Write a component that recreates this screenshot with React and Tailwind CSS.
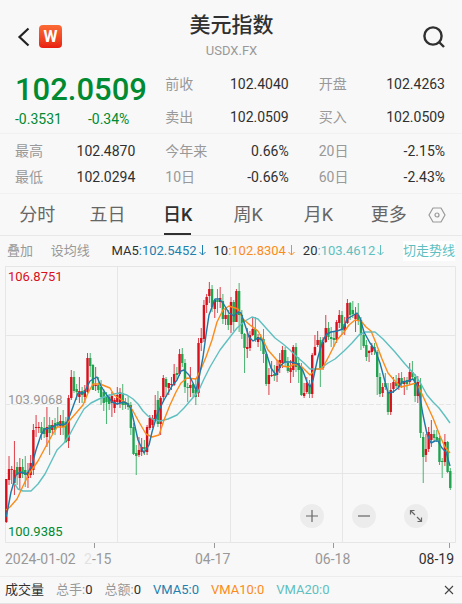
import React, { useState } from "react";

const UP = "#d8101c";
const DOWN = "#1fa34f";

// [direction, high, body top, body bottom, low], one entry per trading day
const candles = [
  ["u", 479, 479, 522, 523], ["u", 456, 469, 480, 485], ["u", 466, 469, 470, 484], ["u", 441, 470, 483, 495],
  ["d", 462, 467, 475, 485], ["u", 458, 467, 478, 490], ["d", 459, 467, 474, 478], ["d", 456, 470, 475, 487],
  ["u", 463, 472, 478, 488], ["u", 455, 463, 475, 478], ["u", 424, 430, 470, 475], ["u", 415, 427, 428, 437],
  ["u", 422, 427, 428, 433], ["d", 422, 427, 433, 440], ["d", 417, 428, 434, 438], ["u", 407, 427, 437, 447],
  ["d", 417, 425, 433, 455], ["u", 420, 425, 430, 434], ["d", 418, 423, 430, 435], ["d", 407, 422, 425, 427],
  ["u", 415, 421, 426, 435], ["d", 410, 421, 427, 435], ["d", 417, 422, 442, 443], ["u", 395, 398, 441, 448],
  ["u", 370, 377, 398, 400], ["d", 371, 377, 391, 393], ["d", 384, 389, 392, 400], ["u", 377, 391, 397, 403],
  ["d", 387, 391, 395, 403], ["u", 385, 390, 397, 403], ["u", 353, 358, 392, 393], ["d", 353, 358, 366, 377],
  ["d", 364, 365, 390, 390], ["u", 367, 385, 386, 391], ["d", 377, 385, 390, 393], ["d", 380, 387, 397, 405],
  ["d", 389, 392, 403, 411], ["d", 392, 397, 402, 424], ["d", 394, 397, 404, 410], ["u", 392, 396, 403, 417],
  ["u", 398, 400, 408, 413], ["u", 387, 395, 402, 405], ["u", 388, 392, 403, 408], ["d", 384, 393, 405, 410],
  ["d", 398, 402, 405, 409], ["d", 396, 403, 407, 410], ["d", 402, 405, 428, 435], ["d", 423, 427, 454, 455],
  ["d", 445, 453, 456, 475], ["u", 437, 450, 455, 457], ["u", 438, 447, 452, 456], ["d", 440, 447, 449, 455],
  ["u", 425, 427, 452, 455], ["u", 415, 418, 428, 430], ["u", 415, 418, 425, 428], ["u", 395, 410, 419, 421],
  ["d", 391, 400, 424, 427], ["u", 396, 398, 424, 435], ["u", 375, 378, 397, 402], ["d", 377, 379, 387, 397],
  ["u", 383, 383, 388, 395], ["u", 377, 384, 385, 390], ["u", 364, 374, 385, 386], ["d", 367, 373, 375, 379],
  ["u", 349, 354, 374, 376], ["d", 348, 354, 363, 367], ["d", 359, 363, 387, 393], ["d", 383, 387, 388, 402],
  ["u", 367, 385, 388, 397], ["d", 383, 384, 393, 397], ["d", 378, 390, 397, 405], ["u", 338, 343, 393, 397],
  ["u", 328, 338, 343, 351], ["u", 300, 305, 339, 342], ["u", 294, 297, 305, 313], ["u", 282, 289, 296, 303],
  ["d", 285, 289, 307, 312], ["u", 299, 300, 309, 318], ["d", 289, 300, 302, 313], ["u", 287, 298, 302, 308],
  ["d", 294, 301, 319, 324], ["u", 309, 315, 319, 325], ["d", 310, 315, 325, 330], ["u", 297, 302, 325, 333],
  ["d", 300, 302, 322, 331], ["u", 289, 291, 322, 322], ["d", 283, 291, 315, 332], ["d", 310, 315, 334, 339],
  ["d", 333, 334, 348, 373], ["u", 328, 347, 349, 358], ["u", 331, 335, 348, 351], ["u", 318, 329, 335, 336],
  ["d", 317, 329, 340, 342], ["u", 334, 337, 342, 347], ["d", 334, 337, 340, 351], ["d", 329, 339, 354, 363],
  ["d", 353, 354, 384, 386], ["u", 368, 375, 384, 395], ["u", 361, 375, 376, 377], ["d", 365, 374, 376, 381],
  ["u", 360, 366, 375, 382], ["u", 353, 360, 368, 373], ["u", 346, 350, 363, 368], ["d", 347, 350, 362, 367],
  ["d", 357, 363, 371, 373], ["u", 360, 368, 372, 383], ["u", 345, 347, 370, 377], ["d", 343, 347, 367, 372],
  ["d", 357, 363, 370, 383], ["d", 363, 367, 395, 396], ["u", 383, 393, 396, 398], ["u", 377, 383, 392, 394],
  ["d", 380, 385, 394, 398], ["u", 353, 355, 394, 398], ["u", 335, 347, 355, 356], ["u", 331, 340, 345, 347],
  ["d", 337, 340, 368, 387], ["u", 337, 342, 368, 370], ["u", 315, 328, 342, 343], ["d", 322, 328, 337, 340],
  ["d", 327, 337, 339, 347], ["d", 331, 338, 340, 347], ["u", 320, 322, 340, 343], ["u", 310, 315, 323, 328],
  ["d", 311, 315, 330, 335], ["u", 317, 324, 331, 335], ["u", 299, 303, 323, 324], ["d", 302, 303, 315, 320],
  ["d", 301, 310, 314, 318], ["u", 307, 314, 319, 332], ["d", 303, 315, 320, 325], ["d", 317, 320, 335, 350],
  ["d", 332, 335, 346, 348], ["d", 340, 345, 357, 361], ["u", 350, 351, 353, 362], ["u", 343, 346, 352, 355],
  ["d", 343, 347, 351, 355], ["d", 350, 352, 377, 395], ["d", 373, 377, 394, 397], ["u", 383, 387, 393, 397],
  ["d", 373, 383, 387, 390], ["d", 383, 392, 412, 415], ["u", 383, 390, 412, 415], ["u", 377, 382, 389, 393],
  ["d", 375, 382, 386, 388], ["u", 373, 378, 387, 390], ["d", 372, 378, 384, 388], ["u", 377, 381, 384, 395],
  ["d", 377, 380, 384, 390], ["u", 363, 372, 382, 385], ["d", 361, 372, 377, 380], ["d", 374, 377, 396, 402],
  ["u", 376, 382, 396, 403], ["d", 378, 385, 433, 438], ["d", 432, 437, 457, 483], ["u", 434, 449, 455, 462],
  ["u", 427, 432, 449, 452], ["u", 420, 434, 440, 447], ["d", 430, 434, 438, 442], ["d", 430, 437, 440, 442],
  ["d", 433, 438, 462, 465], ["d", 458, 461, 462, 478], ["u", 434, 442, 462, 466], ["d", 441, 442, 472, 473],
  ["d", 468, 471, 488, 490],
];

const ma5 =
  "6,517 8,508 11,492 16,475 20,472 27,474 32,465 36,450 41,435 45,429 50,428 56,425 66,424 70,415 74,404 78,393 84,393 90,381 97,377 101,386 106,394 112,402 117,404 124,402 128,404 131,409 134,422 138,440 144,453 149,445 152,432 157,415 160,408 164,400 168,393 172,386 177,380 181,371 184,370 189,375 193,383 196,390 199,378 203,357 206,335 209,315 212,307 215,299 219,299 223,303 229,313 234,316 238,312 241,313 245,325 249,337 253,341 258,338 262,340 266,352 271,368 276,375 281,365 285,362 291,362 298,364 303,371 307,382 310,387 313,380 318,357 323,340 327,334 331,332 337,331 343,329 347,319 352,316 357,313 360,318 364,332 370,343 375,350 380,363 384,378 388,393 393,392 398,388 402,382 408,381 413,379 417,385 420,397 423,415 427,434 431,443 435,441 438,441 442,448 446,452 450,466";
const ma10 =
  "6,510 10,507 17,499 23,486 29,474 38,461 45,448 51,437 57,427 64,427 70,420 77,412 83,405 88,393 93,384 100,384 110,388 114,395 120,399 128,404 133,411 139,422 146,434 152,437 159,435 164,420 170,405 176,392 181,383 187,378 196,379 201,369 206,357 212,340 217,322 223,310 229,306 238,309 243,319 250,325 258,331 264,342 268,350 275,358 282,366 288,367 295,364 302,367 310,375 316,369 322,369 329,356 337,340 344,332 349,325 355,320 361,321 366,327 371,331 376,343 382,359 388,373 394,380 401,387 409,385 416,383 421,392 427,405 433,418 440,436 445,447 450,453";
const ma20 =
  "14,483 18,489 23,491 31,491 38,484 45,474 51,462 57,450 64,443 70,434 77,421 84,409 91,403 99,399 107,396 114,394 120,393 127,395 133,399 138,404 143,411 148,416 154,420 160,421 168,419 177,415 184,408 190,401 198,392 204,379 210,367 220,350 230,337 237,328 245,321 252,317 258,319 266,328 275,338 283,344 290,350 297,357 304,363 310,369 320,369 328,363 335,359 344,351 352,343 359,335 365,332 375,332 383,339 395,352 405,364 415,375 421,384 427,395 433,402 439,408 445,416 450,423";

const stats = [
  ["最高", "102.4870"],
  ["今年来", "0.66%"],
  ["20日", "-2.15%"],
  ["最低", "102.0294"],
  ["10日", "-0.66%"],
  ["60日", "-2.43%"],
];

const tabs = ["分时", "五日", "日K", "周K", "月K", "更多"];

const Stat = ({ label, value }) => (
  <div className="flex items-center justify-between">
    <dt className="text-[#999]">{label}</dt>
    <dd className="text-[#303030]">{value}</dd>
  </div>
);

const MaValue = ({ label, value, className }) => (
  <span>
    <span className="text-[#303030]">{label}</span>
    <span className={className}>:{value}</span>
    <svg viewBox="0 0 9 12" className={`inline-block w-[9px] h-3 ml-px -mt-1 ${className}`} fill="none" stroke="currentColor">
      <path d="M4.5 1v10M1.5 8l3 3 3-3" />
    </svg>
  </span>
);

const KChart = () => {
  const step = 444 / (candles.length - 1);
  return (
    <svg viewBox="5 266 451 283" className="block w-full h-auto" fill="none">
      {/* Grid */}
      <g stroke="#e6e6e6">
        <path d="M5 266.5H455.5V542.5H5.5V266.5M5 335.5H455M5 473.5H455M117.5 267V542M230.5 267V542M342.5 267V542" />
        <path d="M5 404.5H455" strokeDasharray="5 2" />
      </g>
      <path d="M94.5 543v5M214.5 543v5M333.5 543v5M449.5 543v5" stroke="#999" />
      {/* Candles */}
      {candles.map(([dir, high, top, bottom, low], i) => {
        const x = 6.3 + i * step;
        const color = dir === "u" ? UP : DOWN;
        return (
          <g key={i} fill={color}>
            <rect x={x - 0.5} y={high} width="1" height={low - high} opacity="0.8" />
            <rect x={x - 1.2} y={top} width="2.4" height={Math.max(bottom - top, 1)} />
          </g>
        );
      })}
      {/* Moving averages */}
      <g strokeWidth="1.4" strokeLinejoin="round">
        <polyline points={ma20} stroke="#5fbfc0" />
        <polyline points={ma10} stroke="#fb8b1a" />
        <polyline points={ma5} stroke="#1f78a8" />
      </g>
    </svg>
  );
};

const RoundButton = ({ label, d }) => (
  <button aria-label={label} className="w-6 h-6 rounded-full bg-[#ececec] text-[#666]">
    <svg viewBox="0 0 24 24" className="w-6 h-6" fill="none" stroke="currentColor" strokeWidth="1.2">
      <path d={d} />
    </svg>
  </button>
);

const App = () => {
  const [active, setActive] = useState("日K");

  return (
    <div className="w-full bg-[#f8f8f8] font-['Roboto','Noto_Sans_CJK_SC',sans-serif] text-sm text-[#303030]">
      {/* Header */}
      <header className="grid grid-cols-[1fr_auto_1fr] items-center h-[67px] pt-[6px] pl-[17px] pr-4">
        <div className="flex items-center gap-[9px]">
          <button aria-label="返回">
            <svg viewBox="0 0 13 20" className="w-[13px] h-5" fill="none" stroke="#222" strokeWidth="2.2">
              <path d="M11.5 1.5 2.5 10l9 8.5" />
            </svg>
          </button>
          <div className="flex items-center justify-center w-[23px] h-[23px] rounded bg-linear-to-b from-[#fb6a35] to-[#e81c10] text-white text-base leading-none font-bold">
            W
          </div>
        </div>
        <div className="text-center">
          <h1 className="text-[21px] leading-7 font-medium">美元指数</h1>
          <p className="text-[13px] leading-6 text-[#999]">USDX.FX</p>
        </div>
        <button aria-label="搜索" className="justify-self-end">
          <svg viewBox="0 0 24 24" className="w-6 h-6" fill="none" stroke="#303030" strokeWidth="2.4">
            <circle cx="11" cy="11" r="8.6" />
            <path d="m17 17 5 5" />
          </svg>
        </button>
      </header>

      {/* Quote */}
      <section className="grid grid-cols-[121fr_124fr_127fr] gap-x-[30px] h-[67px] pl-[15px] pr-[17px] border-b border-[#f1f1f1]">
        {/* the last price is wider than its column and runs into the gap */}
        <div className="min-w-0 text-[#008a32]">
          <p className="pt-[3px] text-[31px] leading-10 font-medium">102.0509</p>
          <p className="flex gap-[26px] pt-px leading-4">
            <span>-0.3531</span>
            <span>-0.34%</span>
          </p>
        </div>
        <dl className="flex flex-col gap-3 pt-[7px] leading-[21px]">
          <Stat label="前收" value="102.4040" />
          <Stat label="卖出" value="102.0509" />
        </dl>
        <dl className="flex flex-col gap-3 pt-[7px] leading-[21px]">
          <Stat label="开盘" value="102.4263" />
          <Stat label="买入" value="102.0509" />
        </dl>
      </section>
      <dl className="grid grid-cols-[121fr_124fr_127fr] gap-x-[30px] pl-[15px] pr-[17px] pt-1 pb-[3px] leading-[26px] border-b border-[#f1f1f1]">
        {stats.map(([label, value]) => (
          <Stat key={label} label={label} value={value} />
        ))}
      </dl>

      {/* Period tabs */}
      <nav className="grid grid-cols-[repeat(6,70fr)_26fr] h-[42px] pl-[2px] pr-3 border-b border-[#e8e8e8]">
        {tabs.map((tab) => (
          <button
            key={tab}
            onClick={() => setActive(tab)}
            className={
              tab === active
                ? "relative justify-self-center text-lg font-medium text-[#303030]"
                : "justify-self-center text-lg text-[#666]"
            }
          >
            {tab}
            {tab === active && <span className="absolute bottom-0 inset-x-px h-[2px] bg-[#303030]" />}
          </button>
        ))}
        <button aria-label="设置" className="justify-self-center">
          <svg viewBox="0 0 18 18" className="w-[18px] h-[18px]" fill="none" stroke="#999" strokeWidth="1.2">
            <path d="M5 2h8l4 7-4 7H5L1 9z" strokeLinejoin="round" />
            <circle cx="9" cy="9" r="2" />
          </svg>
        </button>
      </nav>

      {/* Moving average legend */}
      <div className="flex items-center justify-between h-[30px] pl-[7px] pr-[7px] text-[13px] leading-5 whitespace-nowrap">
        <button className="text-[#999]">叠加</button>
        <button className="text-[#999]">设均线</button>
        <div className="flex gap-[7px] pl-1">
          <MaValue label="MA5" value="102.5452" className="text-[#1f7fae]" />
          <MaValue label="10" value="102.8304" className="text-[#fb8b1a]" />
          <MaValue label="20" value="103.4612" className="text-[#5fbfc0]" />
        </div>
        <button className="bg-white text-[#5fbfc0]">切走势线</button>
      </div>

      {/* Chart */}
      <div className="relative pl-[5px] pr-[6px]">
        <KChart />
        <span className="absolute left-2 top-px text-[13px] leading-5 text-[#d8101c]">106.8751</span>
        <span className="absolute left-2 top-[124px] text-[13px] leading-5 text-[#999]">103.9068</span>
        <span className="absolute left-2 bottom-[7px] text-[13px] leading-5 text-[#008a32]">100.9385</span>
        <div className="absolute right-[34px] bottom-[21px] flex gap-7">
          <RoundButton label="放大" d="M12 6v12M6 12h12" />
          <RoundButton label="缩小" d="M6 12h12" />
          <RoundButton label="全屏" d="m6.500 6.500 4.500 4.500M6.500 10.500v-4h4M13 13l4.500 4.500M13.500 17.500h4v-4" />
        </div>
      </div>
      <div className="grid grid-cols-[79fr_111fr_120fr_103fr_36fr] h-7 pl-[5px] pr-2 leading-5 text-[#999] whitespace-nowrap border-b border-[#ececec]">
        <span>2024-01-02</span>
        <span>
          <span className="text-[#e2e2e2]">2</span>-15
        </span>
        <span>04-17</span>
        <span>06-18</span>
        <span className="justify-self-end text-[#303030]">08-19</span>
      </div>

      {/* Volume */}
      <div className="flex items-center gap-3 h-[27px] pl-[5px] pr-2 text-[13px] leading-5 whitespace-nowrap border-b border-[#e2e2e2]">
        <span>成交量</span>
        <span>
          <span className="text-[#999]">总手:</span>0
        </span>
        <span>
          <span className="text-[#999]">总额:</span>0
        </span>
        <span className="text-[#1f7fae]">VMA5:0</span>
        <span className="text-[#fb8b1a]">VMA10:0</span>
        <span className="text-[#5fbfc0]">VMA20:0</span>
        <button aria-label="关闭" className="ml-auto">
          <svg viewBox="0 0 10 10" className="w-[10px] h-[10px]" fill="none" stroke="#444" strokeWidth="1.1">
            <path d="m1 1 8 8M9 1 1 9" />
          </svg>
        </button>
      </div>
    </div>
  );
};

export default App;
